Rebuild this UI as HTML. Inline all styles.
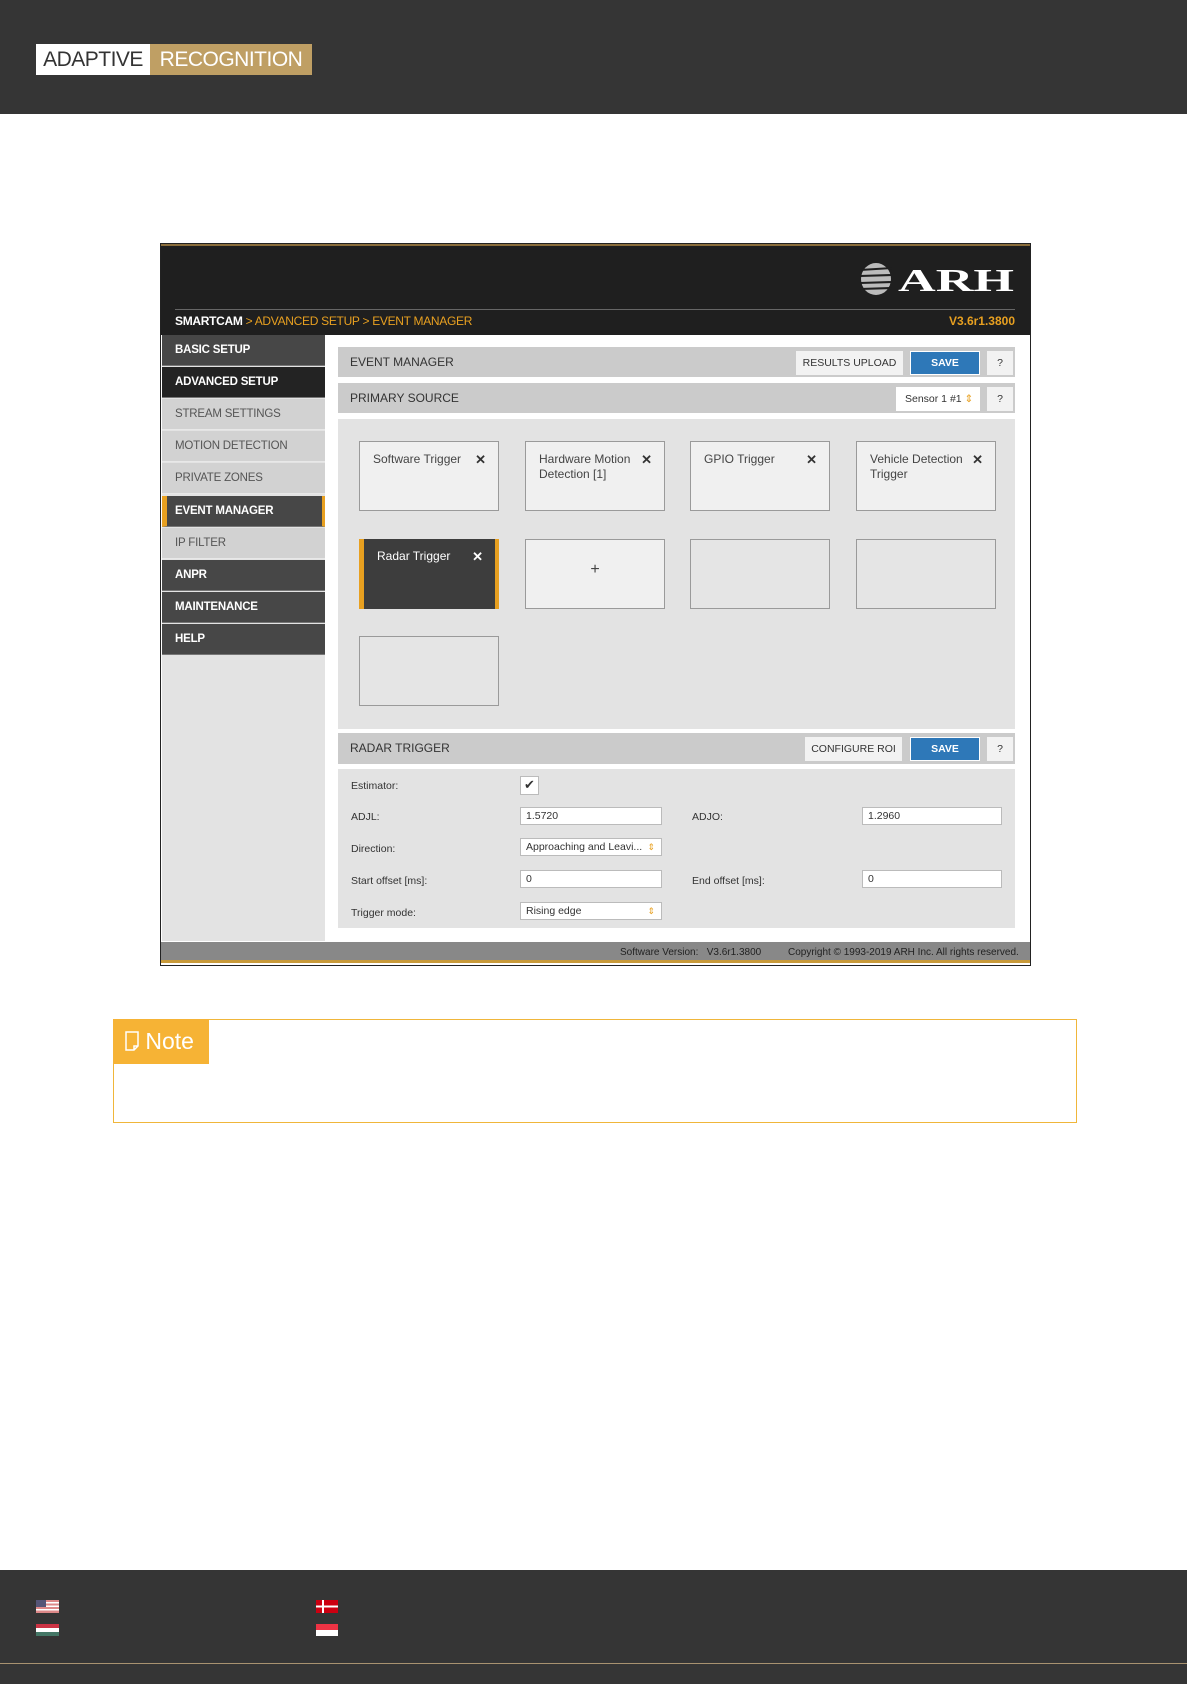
<!DOCTYPE html>
<html><head><meta charset="utf-8"><style>
*{margin:0;padding:0;box-sizing:border-box}
body{width:1191px;height:1684px;position:relative;background:#fff;font-family:"Liberation Sans",sans-serif;overflow:hidden}
.a{position:absolute}
.hdr{background:#353535}
.side div{position:absolute;left:0;width:163px;height:31px;font-size:11.5px;padding-left:13px;line-height:31px;letter-spacing:-0.2px}
.dk{background:#474747;color:#fff;font-weight:bold;border-bottom:1px solid #777}
.lt{background:#d2d2d2;color:#555;border-bottom:1px solid #e8e8e8}
.ph{position:absolute;left:338px;width:677px;background:#cbcbcb;font-size:12px;color:#333;padding-left:12px}
.btn{position:absolute;font-size:10.5px;text-align:center;color:#333;background:#f2f2f2}
.blue{background:#2e78b8;color:#fff;font-weight:bold;border:1px solid #fff}
.card{position:absolute;width:140px;height:70px;border:1px solid #9a9a9a;background:#f0f0f0;font-size:12px;color:#444;padding:10px 0 0 13px;line-height:15px}
.card b{position:absolute;right:12px;top:10px;font-size:13px;color:#333}
.lbl{position:absolute;left:351px;font-size:10.5px;color:#333}
.inp{position:absolute;height:18px;background:#fff;border:1px solid #bbb;font-size:10.5px;color:#333;padding-left:5px;line-height:16px}
.ar{position:absolute;right:6px;top:0;color:#e8a020;font-size:9px}
</style></head><body>
<div class="a hdr" style="left:0;top:0;width:1187px;height:114px"></div>
<div class="a" style="left:36px;top:44px;width:114px;height:31px;background:#fff;color:#333;font-size:21px;line-height:31px;text-align:center;letter-spacing:-0.5px">ADAPTIVE</div>
<div class="a" style="left:150px;top:44px;width:162px;height:31px;background:#bf9f64;color:#fff;font-size:21px;line-height:31px;text-align:center;letter-spacing:-0.5px">RECOGNITION</div>

<div class="a" style="left:160px;top:243px;width:871px;height:723px;border:1px solid #222;background:#fff"></div>
<div class="a" style="left:161px;top:244px;width:869px;height:91px;background:#1f1f1f;border-top:2px solid #8a6d3b"></div>
<div class="a" style="left:175px;top:309px;width:840px;height:1px;background:#666"></div>
<div class="a" style="left:175px;top:314px;font-size:12px;font-weight:bold;color:#fff;letter-spacing:-0.3px">SMARTCAM <span style="color:#e8a020;font-weight:normal">&gt; ADVANCED SETUP &gt; EVENT MANAGER</span></div>
<div class="a" style="left:930px;top:314px;width:85px;text-align:right;font-size:12px;color:#e8a020;font-weight:bold">V3.6r1.3800</div>
<svg class="a" style="left:860px;top:262px" width="156" height="34"><ellipse cx="16" cy="17" rx="15" ry="16" fill="#bbb"/><g stroke="#1f1f1f" stroke-width="2"><line x1="0" y1="8" x2="32" y2="6"/><line x1="0" y1="14" x2="32" y2="13"/><line x1="0" y1="21" x2="32" y2="20"/><line x1="0" y1="27" x2="32" y2="26"/></g><text x="38" y="29" font-family="Liberation Serif" font-weight="bold" font-size="32" fill="#fff" textLength="116" lengthAdjust="spacingAndGlyphs">ARH</text></svg>

<div class="a" style="left:162px;top:335px;width:163px;height:606px;background:#e3e3e3"></div>
<div class="side">
<div class="dk" style="top:335px;left:162px">BASIC SETUP</div>
<div class="dk" style="top:367px;left:162px;background:#232323">ADVANCED SETUP</div>
<div class="lt" style="top:399px;left:162px">STREAM SETTINGS</div>
<div class="lt" style="top:431px;left:162px">MOTION DETECTION</div>
<div class="lt" style="top:463px;left:162px">PRIVATE ZONES</div>
<div class="dk" style="top:496px;left:162px;border-left:5px solid #e8a020;border-right:3px solid #e8a020;padding-left:8px">EVENT MANAGER</div>
<div class="lt" style="top:528px;left:162px">IP FILTER</div>
<div class="dk" style="top:560px;left:162px">ANPR</div>
<div class="dk" style="top:592px;left:162px">MAINTENANCE</div>
<div class="dk" style="top:624px;left:162px">HELP</div>
</div>

<div class="ph" style="top:347px;height:30px;line-height:30px">EVENT MANAGER</div>
<div class="btn" style="left:796px;top:351px;width:107px;height:24px;line-height:24px">RESULTS UPLOAD</div>
<div class="btn blue" style="left:910px;top:351px;width:70px;height:24px;line-height:22px">SAVE</div>
<div class="btn" style="left:987px;top:351px;width:26px;height:24px;line-height:24px">?</div>
<div class="ph" style="top:383px;height:30px;line-height:30px">PRIMARY SOURCE</div>
<div class="btn" style="left:896px;top:387px;width:84px;height:24px;line-height:24px;background:#fff;text-align:left;padding-left:9px">Sensor 1 #1 <span style="color:#e8a020">⇕</span></div>
<div class="btn" style="left:987px;top:387px;width:26px;height:24px;line-height:24px">?</div>

<div class="a" style="left:338px;top:419px;width:677px;height:310px;background:#e3e3e3"></div>
<div class="card" style="left:359px;top:441px">Software Trigger<b>✕</b></div>
<div class="card" style="left:525px;top:441px">Hardware Motion<br>Detection [1]<b>✕</b></div>
<div class="card" style="left:690px;top:441px">GPIO Trigger<b>✕</b></div>
<div class="card" style="left:856px;top:441px">Vehicle Detection<br>Trigger<b>✕</b></div>
<div class="card" style="left:359px;top:539px;background:#3d3d3d;color:#fff;border:none;border-left:5px solid #e8a020;border-right:4px solid #e8a020;padding-left:13px">Radar Trigger<b style="color:#fff">✕</b></div>
<div class="card" style="left:525px;top:539px;text-align:center;padding:22px 0 0;font-size:16px">+</div>
<div class="card" style="left:690px;top:539px;background:#e5e5e5"></div>
<div class="card" style="left:856px;top:539px;background:#e5e5e5"></div>
<div class="card" style="left:359px;top:636px;background:#e5e5e5"></div>

<div class="ph" style="top:733px;height:31px;line-height:31px">RADAR TRIGGER</div>
<div class="btn" style="left:805px;top:737px;width:97px;height:24px;line-height:24px">CONFIGURE ROI</div>
<div class="btn blue" style="left:910px;top:737px;width:70px;height:24px;line-height:22px">SAVE</div>
<div class="btn" style="left:987px;top:737px;width:26px;height:24px;line-height:24px">?</div>
<div class="a" style="left:338px;top:769px;width:677px;height:159px;background:#e3e3e3"></div>
<div class="lbl" style="top:780px">Estimator:</div>
<div class="inp" style="left:520px;top:776px;width:19px;height:19px;padding:0;text-align:center;font-size:13px">✔</div>
<div class="lbl" style="top:811px">ADJL:</div>
<div class="inp" style="left:520px;top:807px;width:142px">1.5720</div>
<div class="lbl" style="top:811px;left:692px">ADJO:</div>
<div class="inp" style="left:862px;top:807px;width:140px">1.2960</div>
<div class="lbl" style="top:843px">Direction:</div>
<div class="inp" style="left:520px;top:838px;width:142px">Approaching and Leavi... <span class="ar">⇕</span></div>
<div class="lbl" style="top:875px">Start offset [ms]:</div>
<div class="inp" style="left:520px;top:870px;width:142px">0</div>
<div class="lbl" style="top:875px;left:692px">End offset [ms]:</div>
<div class="inp" style="left:862px;top:870px;width:140px">0</div>
<div class="lbl" style="top:907px">Trigger mode:</div>
<div class="inp" style="left:520px;top:902px;width:142px">Rising edge <span class="ar">⇕</span></div>

<div class="a" style="left:161px;top:942px;width:869px;height:21px;background:#888;border-bottom:3px solid #c89a3a"></div>
<div class="a" style="left:620px;top:947px;font-size:10px;color:#222">Software Version:&nbsp;&nbsp; V3.6r1.3800</div>
<div class="a" style="left:788px;top:947px;font-size:10px;color:#222">Copyright © 1993-2019 ARH Inc. All rights reserved.</div>

<div class="a" style="left:113px;top:1019px;width:964px;height:104px;border:1px solid #f0b63a"></div>
<div class="a" style="left:113px;top:1019px;width:96px;height:45px;background:#f6b335;color:#fff;font-size:23px;line-height:45px;padding-left:12px">
<svg width="14" height="20" style="vertical-align:-2px"><path d="M1 1H13V15L9 19H1Z M9 19V15H13" fill="none" stroke="#fff" stroke-width="1.5"/></svg> Note</div>

<div class="a hdr" style="left:0;top:1570px;width:1187px;height:114px"></div>
<div class="a" style="left:0;top:1663px;width:1187px;height:1px;background:#a89270"></div>
<svg class="a" style="left:36px;top:1600px" width="23" height="13"><rect width="23" height="13" fill="#d88"/><g fill="#fff"><rect y="2" width="23" height="1.5"/><rect y="5.5" width="23" height="1.5"/><rect y="9" width="23" height="1.5"/></g><rect width="10" height="7" fill="#557"/></svg>
<svg class="a" style="left:36px;top:1624px" width="23" height="12"><rect width="23" height="4" fill="#c34"/><rect y="4" width="23" height="4" fill="#fff"/><rect y="8" width="23" height="4" fill="#476"/></svg>
<svg class="a" style="left:316px;top:1600px" width="22" height="13"><rect width="22" height="13" fill="#c01"/><rect x="6" width="2" height="13" fill="#fff"/><rect y="5.5" width="22" height="2" fill="#fff"/></svg>
<svg class="a" style="left:316px;top:1624px" width="22" height="12"><rect width="22" height="6" fill="#e34"/><rect y="6" width="22" height="6" fill="#fff"/></svg>
</body></html>
